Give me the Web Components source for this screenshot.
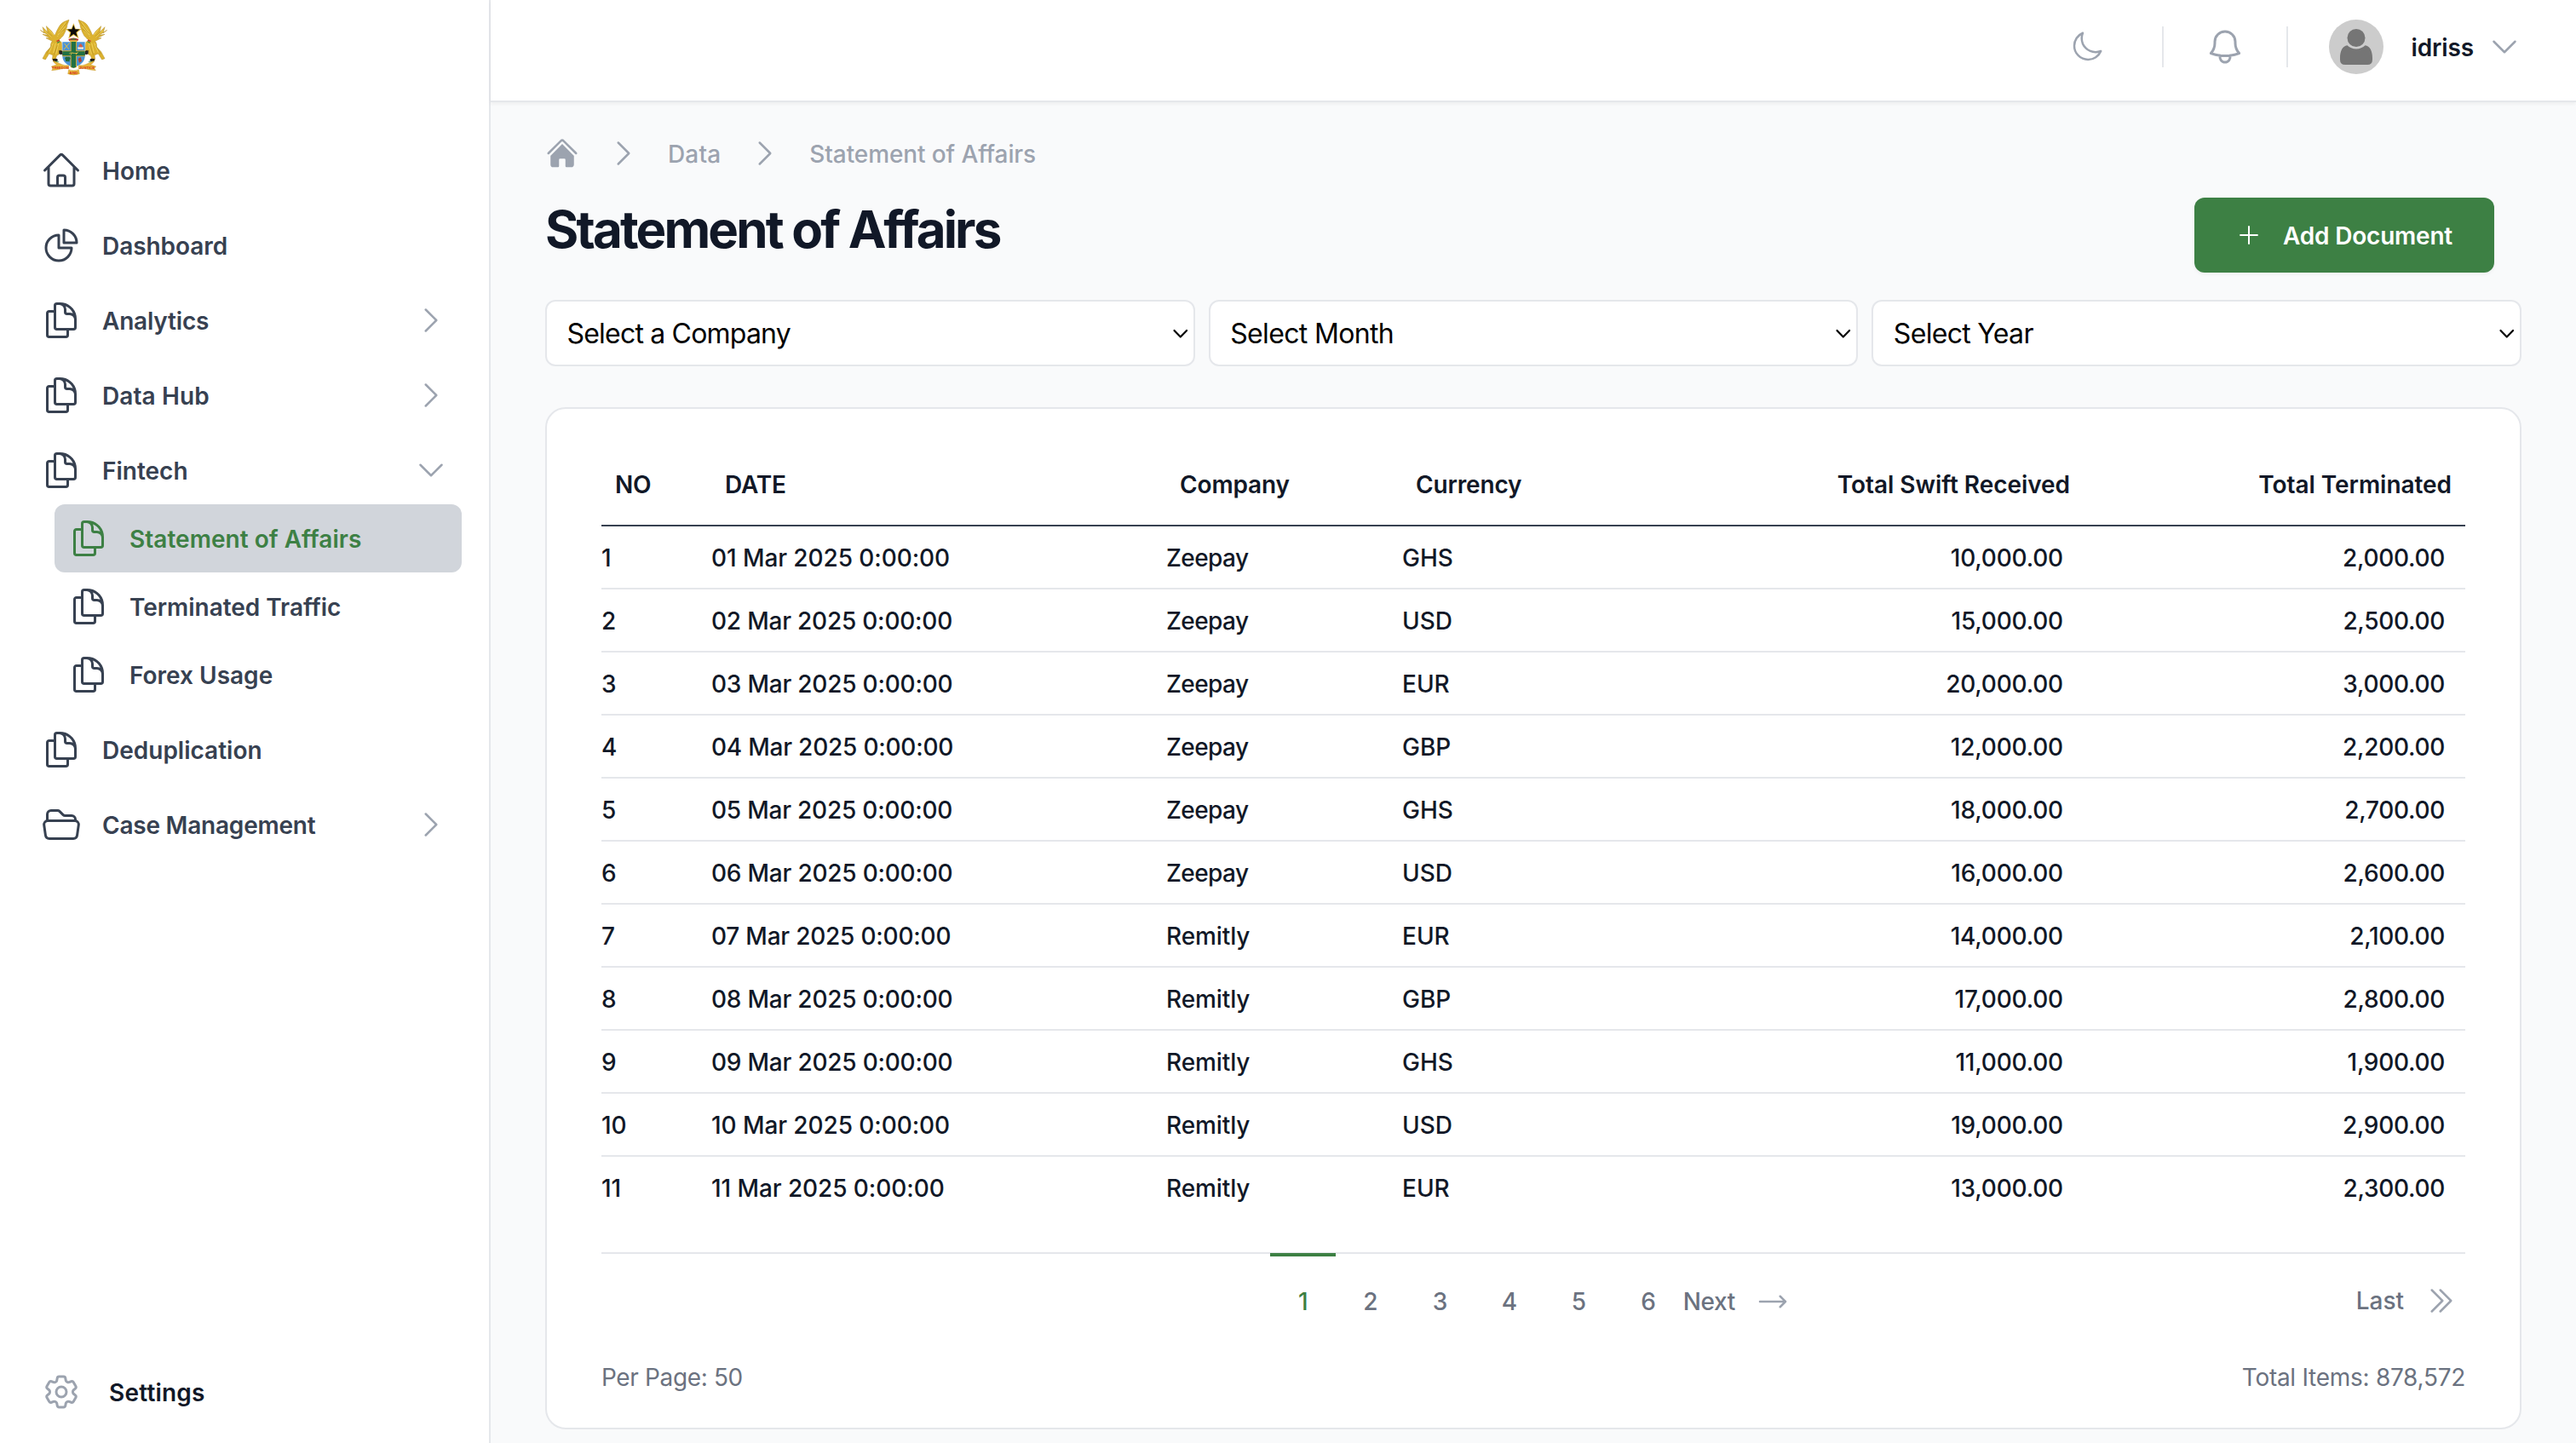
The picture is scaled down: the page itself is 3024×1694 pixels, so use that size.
<!DOCTYPE html>
<html lang="en">
<head>
<meta charset="utf-8">
<title>Statement of Affairs</title>
<style>
  html, body { margin: 0; height: 100%; }
  body { font-family: Inter, "Liberation Sans", sans-serif; font-size: 28px; line-height: 40px; color: #111827; background: #f9fafb; overflow: hidden; -webkit-font-smoothing: antialiased; }
</style>
</head>
<body>
<admin-app></admin-app>
<script>
const ICONS = {
  home: '<path d="m2.25 12 8.954-8.955c.44-.439 1.152-.439 1.591 0L21.75 12M4.5 9.75v10.125c0 .621.504 1.125 1.125 1.125H9.75v-4.875c0-.621.504-1.125 1.125-1.125h2.25c.621 0 1.125.504 1.125 1.125V21h4.125c.621 0 1.125-.504 1.125-1.125V9.75M8.25 21h8.25"/>',
  homeSolid: '<g fill="currentColor" stroke="none"><path d="M11.47 3.841a.75.75 0 0 1 1.06 0l8.69 8.69a.75.75 0 1 0 1.06-1.061l-8.689-8.69a2.25 2.25 0 0 0-3.182 0l-8.69 8.69a.75.75 0 1 0 1.061 1.06l8.69-8.689Z"/><path d="m12 5.432 8.159 8.159c.03.03.06.058.091.086v6.198c0 1.035-.84 1.875-1.875 1.875H15a.75.75 0 0 1-.75-.75v-4.5a.75.75 0 0 0-.75-.75h-3a.75.75 0 0 0-.75.75V21a.75.75 0 0 1-.75.75H5.625a1.875 1.875 0 0 1-1.875-1.875v-6.198a2.29 2.29 0 0 0 .091-.086L12 5.432Z"/></g>',
  pie: '<path d="M10.5 6a7.5 7.5 0 1 0 7.5 7.5h-7.5V6Z"/><path d="M13.5 10.5H21A7.5 7.5 0 0 0 13.5 3v7.5Z"/>',
  docs: '<path d="M15.75 17.25v3.375c0 .621-.504 1.125-1.125 1.125h-9.75a1.125 1.125 0 0 1-1.125-1.125V7.875c0-.621.504-1.125 1.125-1.125H6.75a9.06 9.06 0 0 1 1.5.124m7.5 10.376h3.375c.621 0 1.125-.504 1.125-1.125V11.25c0-4.46-3.243-8.161-7.5-8.876a9.06 9.06 0 0 0-1.5-.124H9.375c-.621 0-1.125.504-1.125 1.125v3.5m7.5 10.375H9.375a1.125 1.125 0 0 1-1.125-1.125v-9.25m12 6.625v-1.875a3.375 3.375 0 0 0-3.375-3.375h-1.5a1.125 1.125 0 0 1-1.125-1.125v-1.5a3.375 3.375 0 0 0-3.375-3.375H9.75"/>',
  folder: '<path d="M3.75 9.776c.112-.017.227-.026.344-.026h15.812c.117 0 .232.009.344.026m-16.5 0a2.25 2.25 0 0 0-1.883 2.542l.857 6a2.25 2.25 0 0 0 2.227 1.932H19.05a2.25 2.25 0 0 0 2.227-1.932l.857-6a2.25 2.25 0 0 0-1.883-2.542m-16.5 0V6A2.25 2.25 0 0 1 6 3.75h3.879a1.5 1.5 0 0 1 1.06.44l2.122 2.12a1.5 1.5 0 0 0 1.06.44H18A2.25 2.25 0 0 1 20.25 9v.776"/>',
  cog: '<path d="M9.594 3.94c.09-.542.56-.94 1.11-.94h2.593c.55 0 1.02.398 1.11.94l.213 1.281c.063.374.313.686.645.87.074.04.147.083.22.127.325.196.72.257 1.075.124l1.217-.456a1.125 1.125 0 0 1 1.37.49l1.296 2.247a1.125 1.125 0 0 1-.26 1.431l-1.003.827c-.293.241-.438.613-.43.992a7.723 7.723 0 0 1 0 .255c-.008.378.137.75.43.991l1.004.827c.424.35.534.955.26 1.43l-1.298 2.247a1.125 1.125 0 0 1-1.369.491l-1.217-.456c-.355-.133-.75-.072-1.076.124a6.47 6.47 0 0 1-.22.128c-.331.183-.581.495-.644.869l-.213 1.281c-.09.543-.56.94-1.11.94h-2.594c-.55 0-1.019-.398-1.11-.94l-.213-1.281c-.062-.374-.312-.686-.644-.87a6.52 6.52 0 0 1-.22-.127c-.325-.196-.72-.257-1.076-.124l-1.217.456a1.125 1.125 0 0 1-1.369-.49l-1.297-2.247a1.125 1.125 0 0 1 .26-1.431l1.004-.827c.292-.24.437-.613.43-.991a6.932 6.932 0 0 1 0-.255c.007-.38-.138-.751-.43-.992l-1.004-.827a1.125 1.125 0 0 1-.26-1.43l1.297-2.247a1.125 1.125 0 0 1 1.37-.491l1.216.456c.356.133.751.072 1.076-.124.072-.044.146-.086.22-.128.332-.183.582-.495.644-.869l.214-1.28Z"/><path d="M15 12a3 3 0 1 1-6 0 3 3 0 0 1 6 0Z"/>',
  moon: '<path d="M21.752 15.002A9.72 9.72 0 0 1 18 15.75c-5.385 0-9.75-4.365-9.75-9.75 0-1.33.266-2.597.748-3.752A9.753 9.753 0 0 0 3 11.25C3 16.635 7.365 21 12.75 21a9.753 9.753 0 0 0 9.002-5.998Z"/>',
  bell: '<path d="M14.857 17.082a23.848 23.848 0 0 0 5.454-1.31A8.967 8.967 0 0 1 18 9.75V9A6 6 0 0 0 6 9v.75a8.967 8.967 0 0 1-2.312 6.022c1.733.64 3.56 1.085 5.455 1.31m5.714 0a24.255 24.255 0 0 1-5.714 0m5.714 0a3 3 0 1 1-5.714 0"/>',
  right: '<path d="m8.25 4.5 7.5 7.5-7.5 7.5"/>',
  down: '<path d="m19.5 8.25-7.5 7.5-7.5-7.5"/>',
  last: '<path d="m5.25 4.5 7.5 7.5-7.5 7.5m6-15 7.5 7.5-7.5 7.5"/>',
  next: '<path d="M17.25 8.25 21 12m0 0-3.75 3.75M21 12H3"/>',
  plus: '<path stroke-linecap="butt" d="M12 4v16M4 12h16"/>'
};

const make = (name, build) => customElements.define(name, class extends HTMLElement {
  connectedCallback() {
    if (this.shadowRoot) return;
    this.attachShadow({ mode: 'open' }).innerHTML = build(this);
  }
});

make('ui-icon', el => {
  const size = el.getAttribute('size') || 48;
  return `<style>:host{display:block;flex:none;width:${size}px;height:${size}px}svg{display:block}</style>
  <svg width="${size}" height="${size}" viewBox="0 0 24 24" fill="none" stroke="currentColor" stroke-width="1.5" stroke-linecap="round" stroke-linejoin="round">${ICONS[el.getAttribute('name')]}</svg>`;
});

make('state-crest', () => {
  const eagle = `
    <path fill="#dcb22f" stroke="#b48e28" stroke-width="1.5" d="M82 106 L96 117 90 95 108 113 103 92 122 110 C129 119 131 125 134 123 C138 112 145 98 152 88 C159 79 168 75 183 70 C181 80 175 88 176 95 C171 103 172 110 167 117 C164 125 159 131 153 135 L157 153 C158 168 160 181 152 189 L140 196 134 212 124 209 126 194 113 189 100 210 90 206 103 182 119 165 C117 158 120 150 124 145 L102 134 116 134 90 121 110 124Z"/>
    <path fill="none" stroke="#f0d25a" stroke-width="3" d="M96 107l26 23M112 104l17 20M172 78l-25 35M169 93l-25 30M163 110l-21 18M127 152l-14 33M136 152l-8 34M146 153l-9 38"/>
    <path fill="none" stroke="#98771d" stroke-width="1.2" d="M104 112l19 16M177 77l-29 39M170 101l-25 25M122 160l-18 30M142 160l-12 34"/>
    <path fill="#c8372d" d="M139 143l11-4 2 4-12 5z"/><path fill="#3b8b3e" d="M141 149l11-5 1 3-11 6z"/>
    <path fill="#fff" d="M149 139l8-3 4 7-8 4z"/>
    <path fill="#23201a" d="M152 176l9 5-5 12-8-4zM125 208l9-2 5 9-12 2z"/>`;
  return `<style>:host{display:block;width:84px;height:70px}svg{display:block}text{font:bold 12px "Liberation Sans",sans-serif;fill:#d63a22}</style>
  <svg width="84" height="70" viewBox="72 60 252 210" role="img" aria-label="Coat of arms">
    ${eagle}<g transform="translate(399 0) scale(-1 1)">${eagle}</g>
    <path fill="#e0b93a" d="M199 82l7.500 19 21 1-16 13 6 21-18.500-12-18 12 5-21-16-13 21-1z"/>
    <path fill="#0c0c0c" d="M199 88l5.500 15 16 .8-12.500 10 4.500 16-13.500-9.500-13.500 9.500 4.500-16-12.500-10 16-.8z"/>
    <path fill="#c9302c" d="M181 138q18-9 36 0l-3 6h-30z"/><path fill="#e3c341" d="M186 142h26v5h-26z"/><path fill="#2d8440" d="M190 136h18v4h-18z"/>
    <path fill="#4a93d6" d="M160 148h79v49c0 22-17 33-39.500 40-22.500-7-39.500-18-39.500-40z"/>
    <path fill="#d3aa36" d="M188 147h22v90l-11 2-11-2zM160 178h79v21h-79z"/>
    <path fill="#207044" d="M191 147h16v90l-8 2-8-2zM160 181h79v15h-79z"/>
    <path fill="none" stroke="#dfbd46" stroke-width="3" d="M165 174l20-23M167 153l15 20M184 189c8-8 20 4 31-4M189 193l4-6M208 192l4-6"/>
    <path fill="#f4ece0" d="M214 166h20v7h-20z"/><path fill="#d95b45" d="M218 161l6-8 7 8v5h-13z"/>
    <path fill="#22683d" d="M171 216v-6c-6-5 1-12 7-9 8-3 14 6 7 10v6z"/><path fill="#b04632" d="M215 207l9-6 4 14-9 6z"/>
    <path fill="#282828" d="M159 184l-12-7 2 12 12 3zM240 184l12-7-2 12-12 3z"/>
    <path fill="#2d8440" d="M128 218q10-9 21 0zM250 218q11-9 21 0z"/><circle cx="138" cy="211" r="5" fill="#1d1d1d"/><circle cx="262" cy="211" r="5" fill="#1d1d1d"/>
    <path fill="#e7b83a" stroke="#bf8d22" stroke-width="1.200" d="M127 214q3 10 14 13l-20 7 6 7-5 7q20-1 32-5 14-4 28-1v-12q-12 2-24-3-14-6-31-13zM272 214q-3 10-14 13l20 7-6 7 5 7q-20-1-32-5-14-4-28-1v-12q12 2 24-3 14-6 31-13zM182 245q17 7 35 0l3 15q-20 8-41 0z"/>
    <text x="124" y="244" textLength="58" lengthAdjust="spacingAndGlyphs">FREEDOM</text>
    <text x="184" y="261" textLength="30" lengthAdjust="spacingAndGlyphs">AND</text>
    <text x="219" y="244" textLength="54" lengthAdjust="spacingAndGlyphs">JUSTICE</text>
  </svg>`;
});

make('nav-item', el => {
  const sub = el.hasAttribute('sub'), active = el.hasAttribute('active'), arrow = el.getAttribute('arrow');
  return `<style>
    :host{display:block;${sub ? 'margin-left:32px' : ''}}
    a{display:flex;align-items:center;gap:24px;height:80px;box-sizing:border-box;padding:0 16px;border-radius:12px;font-weight:600;letter-spacing:${el.getAttribute('ls') || 0}px;color:${active ? '#3d8044' : '#374151'};background:${active ? '#d1d5db' : 'transparent'}}
    span{flex:1;white-space:nowrap;padding-top:2px}
    .arrow{color:#9ca3af}
  </style>
  <a><ui-icon name="${el.getAttribute('icon')}"></ui-icon><span><slot></slot></span>${arrow ? `<ui-icon class="arrow" name="${arrow}" size="40"></ui-icon>` : ''}</a>`;
});

make('side-bar', () => `<style>
    :host{display:flex;flex-direction:column;box-sizing:border-box;width:576px;flex:none;background:#fff;border-right:2px solid #e5e7eb}
    .brand{padding:20px 44px 0;height:140px}
    nav{display:flex;flex-direction:column;gap:8px;padding:0 32px}
    .settings{display:flex;align-items:center;gap:32px;margin-top:auto;padding:0 48px 36px;font-weight:600;letter-spacing:.2px;height:48px}
    .settings ui-icon{color:#9ca3af}
    .settings span{padding-top:1px}
  </style>
  <div class="brand"><state-crest></state-crest></div>
  <nav>
    <nav-item icon="home">Home</nav-item>
    <nav-item icon="pie" ls="-0.05">Dashboard</nav-item>
    <nav-item icon="docs" arrow="right" ls="-0.2">Analytics</nav-item>
    <nav-item icon="docs" arrow="right" ls="0.1">Data Hub</nav-item>
    <div>
      <nav-item icon="docs" arrow="down">Fintech</nav-item>
      <nav-item sub active icon="docs" ls="0.04">Statement of Affairs</nav-item>
      <nav-item sub icon="docs" ls="-0.04">Terminated Traffic</nav-item>
      <nav-item sub icon="docs">Forex Usage</nav-item>
    </div>
    <nav-item icon="docs">Deduplication</nav-item>
    <nav-item icon="folder" arrow="right" ls="-0.22">Case Management</nav-item>
  </nav>
  <div class="settings"><ui-icon name="cog"></ui-icon><span>Settings</span></div>`);

make('user-avatar', () => `<style>:host{display:block}svg{display:block}</style>
  <svg width="64" height="64" viewBox="0 0 64 64"><circle cx="32" cy="32" r="32" fill="#ccc"/><g fill="#757575"><circle cx="32" cy="21.500" r="10.500"/><path d="M21.500 30.300C24 33 28 34.500 32 34.500S40 33 42.500 30.300C48 31 51 37 51 45v2q0 6-6 6H19q-6 0-6-6v-2C13 37 16 31 21.500 30.300Z"/></g></svg>`);

make('top-bar', () => `<style>
    :host{display:flex;align-items:center;justify-content:flex-end;box-sizing:border-box;height:120px;flex:none;padding:0 64px 8px;background:#fff;border-bottom:2px solid #e5e7eb;box-shadow:0 2px 4px rgba(0,0,0,.05);color:#9ca3af}
    i{width:2px;height:48px;background:#e5e7eb;margin-right:48px}
    .moon{margin-right:68px}.bell{margin-right:48px}
    b{font-weight:600;color:#111827;letter-spacing:-.12px;margin:0 16px 0 32px;padding-top:1px}
  </style>
  <ui-icon class="moon" name="moon" size="40"></ui-icon><i></i>
  <ui-icon class="bell" name="bell"></ui-icon><i></i>
  <user-avatar></user-avatar><b>idriss</b><ui-icon name="down" size="40"></ui-icon>`);

make('crumb-trail', () => `<style>
    :host{display:flex;align-items:center;gap:32px;height:40px;color:#9ca3af;font-weight:500;letter-spacing:-.1px}
    span{padding-top:1px}
    .first{letter-spacing:.15px}
  </style>
  <ui-icon name="homeSolid" size="40"></ui-icon><ui-icon name="right" size="40"></ui-icon><span class="first">Data</span>
  <ui-icon name="right" size="40"></ui-icon><span>Statement of Affairs</span>`);

make('page-title', () => `<style>
    :host{display:flex;justify-content:space-between;align-items:flex-start;margin-top:32px;height:88px}
    h1{margin:0;padding-top:1px;font-size:60px;line-height:72px;font-weight:700;letter-spacing:-2.820px}
    button{display:flex;align-items:center;gap:24px;width:352px;height:88px;margin-right:32px;padding:0 0 0 48px;border:0;border-radius:12px;background:#3d8044;color:#fff;font:600 28px/40px Inter,sans-serif;letter-spacing:-.2px;box-shadow:0 2px 4px rgba(0,0,0,.05)}
    button span{padding-top:1px}
  </style>
  <h1>Statement of Affairs</h1>
  <button><ui-icon name="plus" size="32"></ui-icon><span>Add Document</span></button>`);

make('select-box', el => `<style>
    :host{display:flex;flex:1;align-items:center;justify-content:space-between;box-sizing:border-box;height:78px;padding:2px 5px 0 23.500px;border:2px solid #e5e7eb;border-radius:12px;background:#fff;color:#000;font-size:32px;letter-spacing:${el.getAttribute('ls')}px}
    svg{display:block}
  </style>
  <span><slot></slot></span>
  <svg width="20" height="12" viewBox="0 0 20 12" fill="none" stroke="#000" stroke-width="2.200" stroke-linecap="round" stroke-linejoin="round"><path d="M2.500 2l7.300 7.500L17.100 2"/></svg>`);

const ROWS = [
  ['Zeepay', 'GHS', '10,000.00', '2,000.00'], ['Zeepay', 'USD', '15,000.00', '2,500.00'],
  ['Zeepay', 'EUR', '20,000.00', '3,000.00'], ['Zeepay', 'GBP', '12,000.00', '2,200.00'],
  ['Zeepay', 'GHS', '18,000.00', '2,700.00'], ['Zeepay', 'USD', '16,000.00', '2,600.00'],
  ['Remitly', 'EUR', '14,000.00', '2,100.00'], ['Remitly', 'GBP', '17,000.00', '2,800.00'],
  ['Remitly', 'GHS', '11,000.00', '1,900.00'], ['Remitly', 'USD', '19,000.00', '2,900.00'],
  ['Remitly', 'EUR', '13,000.00', '2,300.00']
];

make('data-table', () => `<style>
    :host{display:block}
    .row{display:grid;grid-template-columns:129px 534px 277px 200px 600px 1fr;align-items:center;box-sizing:border-box;height:74px;padding-top:1px;border-bottom:2px solid #e5e7eb;font-weight:500;white-space:nowrap}
    .head{height:98px;border-color:#374151;font-weight:600;letter-spacing:-.15px}
    .head>*{padding-left:16px}
    .row:last-child{border-color:transparent}
    .num{text-align:right;padding-right:24px;letter-spacing:-.2px}
    .num:last-child{letter-spacing:-.3px}
    .head .num{padding-right:16px;letter-spacing:-.05px}
    .date{letter-spacing:-.22px}.date.one{letter-spacing:-.08px}.zeepay{letter-spacing:-.6px}.remitly{letter-spacing:-.1px}
  </style>
  <div class="row head"><span>NO</span><span>DATE</span><span>Company</span><span>Currency</span><span class="num">Total Swift Received</span><span class="num">Total Terminated</span></div>` +
  ROWS.map(([company, currency, swift, term], i) => {
    const n = String(i + 1);
    return `<div class="row"><span>${n}</span><span class="date ${n.includes('1') ? 'one' : ''}">${n.padStart(2, '0')} Mar 2025 0:00:00</span><span class="${company.toLowerCase()}">${company}</span><span>${currency}</span><span class="num">${swift}</span><span class="num">${term}</span></div>`;
  }).join(''));

make('page-nav', () => `<style>
    :host{display:block;margin-top:38px;border-top:2px solid #e5e7eb;color:#6b7280;font-weight:500}
    .pages{display:flex;height:104px}
    .side{flex:1;display:flex;justify-content:flex-end}
    .mid{display:flex;margin-top:-1px;padding-right:8px}
    .p{box-sizing:border-box;width:81.500px;border-top:4px solid transparent;padding-top:33px;text-align:center}
    .p.on{width:77px;height:76px;color:#3d8044;border-color:#3d8044}
    .go{display:flex;align-items:center;gap:24px;height:40px;padding-top:37px;letter-spacing:-.4px}
    .side .go{padding-top:35px;padding-right:8px;letter-spacing:0}
    ui-icon{color:#9ca3af}
    .totals{display:flex;justify-content:space-between;padding-top:21px;font-weight:400;letter-spacing:-.36px}
    .totals :last-child{letter-spacing:-.28px}
  </style>
  <div class="pages"><div class="side"></div>
    <div class="mid"><div class="p on">1</div>${[2, 3, 4, 5, 6].map(n => `<div class="p">${n}</div>`).join('')}<div class="go"><span>Next</span><ui-icon name="next" size="40"></ui-icon></div></div>
    <div class="side"><div class="go"><span>Last</span><ui-icon name="last" size="40"></ui-icon></div></div>
  </div>
  <div class="totals"><span>Per Page: 50</span><span>Total Items: 878,572</span></div>`);

make('admin-app', () => `<style>
    :host{display:flex;width:100%;height:100vh}
    .col{flex:1;display:flex;flex-direction:column;min-width:0}
    main{padding:40px 64px 0}
    .filters{display:flex;gap:16px;margin-top:32px}
    .card{box-sizing:border-box;height:1200px;margin-top:48px;padding:40px 64px 0;border:2px solid #e5e7eb;border-radius:24px;background:#fff}
  </style>
  <side-bar></side-bar>
  <div class="col"><top-bar></top-bar>
    <main>
      <crumb-trail></crumb-trail>
      <page-title></page-title>
      <div class="filters"><select-box ls="-0.8">Select a Company</select-box><select-box ls="-0.65">Select Month</select-box><select-box ls="-0.7">Select Year</select-box></div>
      <section class="card"><data-table></data-table><page-nav></page-nav></section>
    </main>
  </div>`);
</script>
</body>
</html>
